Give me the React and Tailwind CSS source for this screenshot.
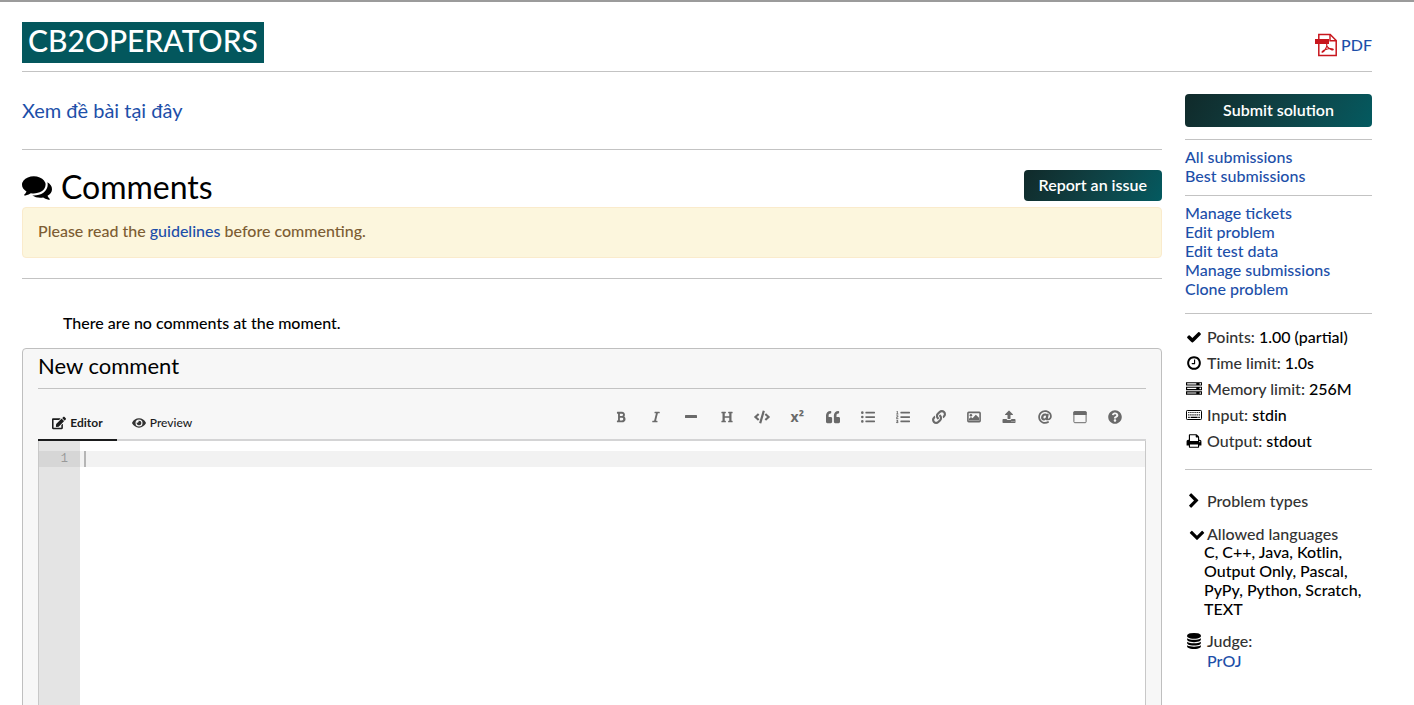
import React, { useState } from 'react';
import clsx from 'clsx';
import {
  FaBold, FaItalic, FaHeading, FaCode, FaQuoteLeft,
  FaListUl, FaListOl, FaLink, FaAt, FaQuestionCircle, FaEdit, FaEye,
} from 'react-icons/fa';

// classic 1792-unit glyphs
const paths = {
  comments: 'M1408 768q0 139-94 257t-256.5 186.5-353.5 68.5q-86 0-176-16-124 88-278 128-36 9-86 16h-3q-11 0-20.5-8t-11.5-21q-1-3-1-6.5t.5-6.5 2-6l2.5-5 3.5-5.5 4-5 4.5-5 4-4.5q5-6 23-25t26-29.5 22.5-29 25-38.5 20.5-44q-124-72-195-177t-71-224q0-139 94-257t256.5-186.5 353.5-68.5 353.5 68.5 256.5 186.5 94 257zm384 256q0 120-71 224.5t-195 176.5q10 24 20.5 44t25 38.5 22.5 29 26 29.5 23 25q1 1 4 4.5t4.5 5 4 5 3.5 5.5l2.5 5 2 6 .5 6.5-1 6.5q-3 14-13 22t-22 7q-50-7-86-16-154-40-278-128-90 16-176 16-271 0-472-132 58 4 88 4 161 0 309-45t264-129q125-92 192-212t67-254q0-77-23-152 129 71 204 178t75 230z',
  check: 'M1671 566q0 40-28 68l-724 724-136 136q-28 28-68 28t-68-28l-136-136-362-362q-28-28-28-68t28-68l136-136q28-28 68-28t68 28l294 295 656-657q28-28 68-28t68 28l136 136q28 28 28 68z',
  clock: 'M1024 544v448q0 14-9 23t-23 9h-320q-14 0-23-9t-9-23v-64q0-14 9-23t23-9h224v-352q0-14 9-23t23-9h64q14 0 23 9t9 23zm416 352q0-148-73-273t-198-198-273-73-273 73-198 198-73 273 73 273 198 198 273 73 273-73 198-198 73-273zm224 0q0 209-103 385.5t-279.5 279.5-385.5 103-385.5-103-279.5-279.5-103-385.5 103-385.5 279.5-279.5 385.5-103 385.5 103 279.5 279.5 103 385.5z',
  server: 'M128 1408h1024v-128h-1024v128zm0-512h1024v-128h-1024v128zm1568 448q0-40-28-68t-68-28-68 28-28 68 28 68 68 28 68-28 28-68zm-1568-960h1024v-128h-1024v128zm1568 448q0-40-28-68t-68-28-68 28-28 68 28 68 68 28 68-28 28-68zm0-512q0-40-28-68t-68-28-68 28-28 68 28 68 68 28 68-28 28-68zm96 832v384h-1792v-384h1792zm0-512v384h-1792v-384h1792zm0-512v384h-1792v-384h1792z',
  print: 'M448 1536h896v-256h-896v256zm0-640h896v-384h-160q-40 0-68-28t-28-68v-160h-640v640zm1152 64q0-26-19-45t-45-19-45 19-19 45 19 45 45 19 45-19 19-45zm128 0v416q0 13-9.5 22.5t-22.5 9.5h-224v160q0 40-28 68t-68 28h-960q-40 0-68-28t-28-68v-160h-224q-13 0-22.5-9.5t-9.5-22.5v-416q0-79 56.5-135.5t135.5-56.5h64v-544q0-40 28-68t68-28h672q40 0 88 20t76 48l152 152q28 28 48 76t20 88v256h64q79 0 135.5 56.5t56.5 135.5z',
  right: 'M1363 877l-742 742q-19 19-45 19t-45-19l-166-166q-19-19-19-45t19-45l531-531-531-531q-19-19-19-45t19-45l166-166q19-19 45-19t45 19l742 742q19 19 19 45t-19 45z',
  down: 'M1683 808l-742 741q-19 19-45 19t-45-19l-742-741q-19-19-19-45.5t19-45.5l166-165q19-19 45-19t45 19l531 531 531-531q19-19 45-19t45 19l166 165q19 19 19 45.5t-19 45.5z',
  database: 'M896 768q237 0 443-43t325-127v170q0 69-103 128t-280 93.5-385 34.5-385-34.5-280-93.5-103-128v-170q119 84 325 127t443 43zm0 768q237 0 443-43t325-127v170q0 69-103 128t-280 93.5-385 34.5-385-34.5-280-93.5-103-128v-170q119 84 325 127t443 43zm0-384q237 0 443-43t325-127v170q0 69-103 128t-280 93.5-385 34.5-385-34.5-280-93.5-103-128v-170q119 84 325 127t443 43zm0-1152q208 0 385 34.5t280 93.5 103 128v128q0 69-103 128t-280 93.5-385 34.5-385-34.5-280-93.5-103-128v-128q0-69 103-128t280-93.5 385-34.5z',
  upload: 'M1344 1472q0-26-19-45t-45-19-45 19-19 45 19 45 45 19 45-19 19-45zm256 0q0-26-19-45t-45-19-45 19-19 45 19 45 45 19 45-19 19-45zm128-224v320q0 40-28 68t-68 28h-1472q-40 0-68-28t-28-68v-320q0-40 28-68t68-28h427q21 56 70.5 92t110.5 36h256q61 0 110.5-36t70.5-92h427q40 0 68 28t28 68zm-325-648q-17 40-59 40h-256v448q0 26-19 45t-45 19h-256q-26 0-45-19t-19-45v-448h-256q-42 0-59-40-17-39 14-69l448-448q18-19 45-19t45 19l448 448q31 30 14 69z',
};

const Glyph = ({ name, className }) => (
  <svg viewBox="0 0 1792 1792" fill="currentColor" className={className} aria-hidden="true">
    <path d={paths[name]} />
  </svg>
);

const KeyboardIcon = ({ className }) => (
  <svg viewBox="0 0 16 16" fill="none" className={className} aria-hidden="true">
    <rect x="0.5" y="3.5" width="15" height="9" rx="0.8" stroke="currentColor" />
    <path d="M2.2 5.5h11.6M2.2 7.9h11.6" stroke="currentColor" strokeWidth="1.1" strokeDasharray="1.2 0.9" />
    <path d="M2.2 10.4h1.5M4.6 10.4h7M12.3 10.4h1.5" stroke="currentColor" strokeWidth="1.1" />
  </svg>
);

const PdfIcon = ({ className }) => (
  <svg viewBox="0 0 24 24" fill="none" stroke="#c8161d" className={className} aria-hidden="true">
    <path d="M4.8 1.5h11.4l6 6v15H4.8z" strokeWidth="1.5" />
    <path d="M16 1.5v6.2h6.2" strokeWidth="1.4" />
    <path d="M1 6h14v5H1z" fill="#c8161d" stroke="none" />
    <path d="M8 19.5c-.8-1.3 3-2.6 4.5-3.3 2-.9 6.8-1.2 6.8.3 0 1.3-4.3-.8-5.6-2.4-.8-1-1.2-2.6-.7-3.1M8 19.5c1.8 0 4.5-4.5 5-7.5" strokeWidth="1.1" />
  </svg>
);

const MinusIcon = ({ className }) => (
  <svg viewBox="0 0 12 12" className={className} fill="currentColor" aria-hidden="true">
    <rect x="0" y="4" width="12" height="3" rx="0.6" />
  </svg>
);

const ImageIcon = ({ className }) => (
  <svg viewBox="0 0 14 14" className={className} fill="currentColor" aria-hidden="true">
    <rect x="0.9" y="2.4" width="12.2" height="9.2" rx="0.8" fill="none" stroke="currentColor" strokeWidth="1.6" />
    <circle cx="3.9" cy="5.2" r="1.3" />
    <path d="M2 10.6V8.7l2-1.7 1.5 1.2L8.8 4.7l3.2 3v2.9z" />
  </svg>
);

const WindowIcon = ({ className }) => (
  <svg viewBox="0 0 14 14" className={className} fill="currentColor" aria-hidden="true">
    <rect x="0.9" y="1.7" width="12.2" height="11" rx="0.9" fill="none" stroke="currentColor" />
    <path d="M1.4 1.2h11.2q1 0 1 1v2.8H.4V2.2q0-1 1-1z" />
  </svg>
);

const UploadIcon = ({ className }) => <Glyph name="upload" className={className} />;

const Superscript = ({ className }) => <span className={className}>x²</span>;

const tools = [
  { label: 'Bold', icon: FaBold, size: 'size-3' },
  { label: 'Italic', icon: FaItalic, size: 'size-3' },
  { label: 'Horizontal line', icon: MinusIcon, size: 'size-3' },
  { label: 'Heading', icon: FaHeading, size: 'size-3' },
  { label: 'Code', icon: FaCode, size: 'size-4' },
  { label: 'Superscript', icon: Superscript, size: "font-['Open_Sans',sans-serif] text-sm leading-4 font-bold" },
  { label: 'Quote', icon: FaQuoteLeft, size: 'size-3.5' },
  { label: 'Unordered list', icon: FaListUl, size: 'size-3.5' },
  { label: 'Ordered list', icon: FaListOl, size: 'size-3.5' },
  { label: 'Link', icon: FaLink, size: 'size-3.5' },
  { label: 'Image', icon: ImageIcon, size: 'size-3.5' },
  { label: 'Upload image', icon: UploadIcon, size: 'size-3.5' },
  { label: 'Mention', icon: FaAt, size: 'size-3.5' },
  { label: 'Full screen', icon: WindowIcon, size: 'size-3.5' },
  { label: 'Help', icon: FaQuestionCircle, size: 'size-3.5' },
];

const A = ({ children, className }) => (
  <a href="#" className={clsx('text-[#1d4fa9] hover:text-[#0645ad]', className)}>{children}</a>
);

const Rule = ({ className }) => <hr className={clsx('border-t border-[#c3c3c3]', className)} />;

const Info = ({ icon, label, value }) => (
  <div className="flex h-[26px] items-center">
    <span className="flex w-[22px] pl-px">{icon}</span>
    <span><span className="text-[#333]">{label}</span> {value}</span>
  </div>
);

const Sidebar = () => (
  <aside className="w-[187px] shrink-0 pt-[22px]">
    <button className="block h-[33px] w-full rounded bg-linear-120 from-[#102a2a] to-[#035a60] pb-0.5 text-center font-semibold text-white">
      Submit solution
    </button>
    <Rule className="mt-3" />
    <ul className="mt-[7px] leading-[19px]">
      <li><A>All submissions</A></li>
      <li><A>Best submissions</A></li>
    </ul>
    <Rule className="mt-[10px]" />
    <ul className="mt-[7px] leading-[19px]">
      <li><A>Manage tickets</A></li>
      <li><A>Edit problem</A></li>
      <li><A>Edit test data</A></li>
      <li><A>Manage submissions</A></li>
      <li><A>Clone problem</A></li>
    </ul>
    <Rule className="mt-[15px]" />
    <div className="mt-[10px]">
      <Info icon={<Glyph name="check" className="size-4" />} label="Points:" value="1.00 (partial)" />
      <Info icon={<Glyph name="clock" className="size-4" />} label="Time limit:" value="1.0s" />
      <Info icon={<Glyph name="server" className="size-4" />} label="Memory limit:" value="256M" />
      <Info icon={<KeyboardIcon className="size-4" />} label="Input:" value="stdin" />
      <Info icon={<Glyph name="print" className="size-4" />} label="Output:" value="stdout" />
    </div>
    <Rule className="mt-[15px]" />
    <button className="mt-[21px] flex items-center text-[#333]">
      <span className="w-[22px] pl-px"><Glyph name="right" className="size-4 text-black" /></span>
      Problem types
    </button>
    <button className="mt-[13px] flex items-center text-[#333]">
      <span className="w-[22px] pl-1"><Glyph name="down" className="size-4 text-black" /></span>
      Allowed languages
    </button>
    <p className="-mt-0.5 pl-[19px] leading-[19px]">C, C++, Java, Kotlin, Output Only, Pascal, PyPy, Python, Scratch, TEXT</p>
    <div className="mt-[13px] flex items-center text-[#333]">
      <span className="w-[22px] pl-px"><Glyph name="database" className="size-4 text-black" /></span>
      Judge:
    </div>
    <A className="ml-[22px] block">PrOJ</A>
  </aside>
);

const Editor = () => {
  const [text, setText] = useState('');
  return (
    <section className="mt-[15px] rounded border border-[#bfbfbf] bg-[#f7f7f7] px-[15px] pb-4">
      <h3 className="pt-px text-[22px] leading-8 font-normal">New comment</h3>
      <Rule className="mt-1.5" />
      <div className="flex items-end justify-between border-b-2 border-[#d4d4d5] pt-[18px]">
        <div className="-mb-0.5 flex h-[34px] text-xs text-[#1b1c1d]">
          <button className="flex w-[79px] items-center justify-center gap-1 border-b-2 border-[#1b1c1d] font-bold">
            <FaEdit className="size-3.5" /> Editor
          </button>
          <button className="flex w-[90px] items-center justify-center gap-1 border-b-2 border-transparent">
            <FaEye className="size-3.5 text-[#333]" /> Preview
          </button>
        </div>
        <div className="mr-[13px] grid w-[530px] grid-cols-15 pb-3 text-[#6a6a6a]">
          {tools.map(({ label, icon: Icon, size }) => (
            <button key={label} aria-label={label} className="flex h-5 items-center justify-center">
              <Icon className={size} />
            </button>
          ))}
        </div>
      </div>
      <div className="flex h-[300px] border border-t-0 border-[#c8c8c8] bg-white font-['Liberation_Mono',monospace] text-xs leading-4">
        <div className="w-[41px] bg-[#e4e4e4] pt-2.5">
          <div className="bg-[#d6d6d6] pr-3 text-right text-[#999]">1</div>
        </div>
        <div className="relative flex-1 pt-2.5">
          <div className="h-4 bg-[#f2f2f2] pl-1">
            <div className="h-full w-0.5 bg-[#b5b5b5]" />
          </div>
          <textarea
            aria-label="Comment"
            value={text}
            onChange={(e) => setText(e.target.value)}
            className="absolute inset-0 resize-none bg-transparent px-1 pt-2.5 outline-none"
          />
        </div>
      </div>
    </section>
  );
};

export default function App() {
  return (
    <div className="border-t-2 border-[#9b9b9b] bg-white pr-[42px] pl-[22px] font-[Lato,sans-serif] text-base leading-5 font-medium text-black">
      <header className="flex items-end justify-between border-b border-[#c3c3c3] pt-5 pb-2">
        <h1 className="bg-[#03575d] px-1.5 pb-1 text-3xl leading-[37px] text-white">CB2OPERATORS</h1>
        <a href="#" className="mb-1.5 flex items-center gap-[3px] text-[#1d4fa9]">
          <PdfIcon className="size-6" /> PDF
        </a>
      </header>
      <div className="flex gap-[23px]">
        <main className="min-w-0 flex-1">
          <p className="pt-[26px] text-xl leading-6 font-normal"><A>Xem đề bài tại đây</A></p>
          <Rule className="mt-[27px]" />
          <div className="mt-5 flex items-start justify-between">
            <h2 className="flex items-center gap-[9px] text-[32px] leading-[34px] font-normal">
              <Glyph name="comments" className="size-[30px]" /> Comments
            </h2>
            <button className="h-[31px] rounded bg-linear-120 from-[#102a2a] to-[#035a60] px-[15px] pb-0.5 font-semibold text-white">
              Report an issue
            </button>
          </div>
          <div className="mt-[3px] rounded border border-[#faebcc] bg-[#fcf6dd] px-[15px] pt-[13px] pb-4 text-[#7d5d33]">
            Please read the <A>guidelines</A> before commenting.
          </div>
          <Rule className="mt-5" />
          <p className="mt-[34px] ml-[41px]">There are no comments at the moment.</p>
          <Editor />
        </main>
        <Sidebar />
      </div>
    </div>
  );
}
